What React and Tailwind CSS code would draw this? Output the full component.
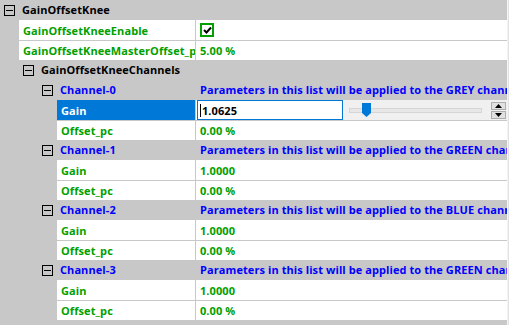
import React from "react";

const channels = [
  { name: "Channel-0", color: "GREY", gain: "1.0625", editing: true },
  { name: "Channel-1", color: "GREEN", gain: "1.0000" },
  { name: "Channel-2", color: "BLUE", gain: "1.0000" },
  { name: "Channel-3", color: "GREEN", gain: "1.0000" },
];

function MinusBox() {
  return (
    <span className="flex h-[11px] w-[11px] shrink-0 items-center justify-center border border-black bg-transparent">
      <span className="h-px w-[7px] bg-black" />
    </span>
  );
}

// a collapsible group line (gray background)
function GroupRow({ level, label, value, blue }) {
  const indent = ["pl-[4px]", "pl-[23px]", "pl-[42px]"][level];
  return (
    <div className="flex h-5 items-center bg-[#c8c8c8] leading-5">
      <div className={`flex h-5 w-[196px] shrink-0 items-center overflow-hidden whitespace-nowrap ${indent}`}>
        <MinusBox />
        <span className={`ml-[7px] ${blue ? "text-[#0000ff]" : "text-black"}`}>{label}</span>
      </div>
      {value && (
        <div className="h-5 min-w-0 flex-1 overflow-hidden whitespace-nowrap pl-[4px] text-[#0000ff]">
          {value}
        </div>
      )}
    </div>
  );
}

// a property line (white background)
function LeafRow({ level, label, children, topLine, selected }) {
  const spacer = level === 1 ? "w-[19px]" : "w-[57px]";
  const labelW = level === 1 ? "w-[176px]" : "w-[138px]";
  return (
    <div className="flex h-5 bg-[#c8c8c8] leading-[19px]">
      <div className={`${spacer} shrink-0`} />
      <div className={`flex min-w-0 flex-1 flex-col ${topLine ? "pt-px" : ""}`}>
        <div className="flex min-h-0 flex-1">
          <div
            className={`flex ${labelW} shrink-0 items-center overflow-hidden whitespace-nowrap pl-[4px] ${
              selected ? "bg-[#0078d7] text-white" : "bg-white text-[#00a000]"
            }`}
          >
            {label}
          </div>
          <div className="w-px shrink-0 bg-[#c8c8c8]" />
          <div className="flex min-w-0 flex-1 items-center bg-white text-[#00a000]">{children}</div>
        </div>
      </div>
    </div>
  );
}

function GainEditor({ value }) {
  return (
    <div className="flex h-full w-full items-stretch">
      <div className="w-px shrink-0 bg-white" />
      <div className="flex w-[146px] shrink-0 items-center border border-[#0078d7] bg-white pl-[2px] text-black">
        <span className="mr-px h-[13px] w-px bg-black" />
        {value}
      </div>
      <div className="relative flex flex-1 items-center bg-[#f0f0f0]">
        <div className="ml-[6px] h-[5px] w-[133px] border border-[#d6d6d6] bg-[#e7e7e7]" />
        <svg className="absolute left-[19px] top-[3px]" width="9" height="14" viewBox="0 0 9 14">
          <path d="M0 0H9V10L4.5 14L0 10Z" fill="#0078d7" />
        </svg>
        <div className="ml-auto mr-[1px] flex flex-col gap-[1px]">
          <div className="flex h-[8px] w-[15px] items-center justify-center border border-[#adadad] bg-[#e1e1e1]">
            <svg width="7" height="4" viewBox="0 0 7 4">
              <path d="M3.5 0L7 4H0Z" fill="#000" />
            </svg>
          </div>
          <div className="flex h-[8px] w-[15px] items-center justify-center border border-[#adadad] bg-[#e1e1e1]">
            <svg width="7" height="4" viewBox="0 0 7 4">
              <path d="M0 0H7L3.5 4Z" fill="#000" />
            </svg>
          </div>
        </div>
      </div>
    </div>
  );
}

function CheckBox() {
  return (
    <span className="ml-[4px] flex h-[14px] w-[14px] items-center justify-center border-2 border-[#00a000] bg-white">
      <svg width="9" height="8" viewBox="0 0 9 8">
        <path d="M1 4L3.5 6.5L8 1.5" stroke="#000" strokeWidth="2" fill="none" />
      </svg>
    </span>
  );
}

export default function App() {
  return (
    <div
      className="flex h-[325px] w-[509px] overflow-hidden bg-[#c8c8c8] text-[11px] font-bold tracking-[0.08px]"
      style={{ fontFamily: '"Open Sans", "Noto Sans", sans-serif' }}
    >
      <div className="w-[507px] shrink-0">
        <GroupRow level={0} label="GainOffsetKnee" />
        <LeafRow level={1} label="GainOffsetKneeEnable">
          <CheckBox />
        </LeafRow>
        <LeafRow level={1} label="GainOffsetKneeMasterOffset_pc" topLine>
          <span className="pl-[4px]">5.00 %</span>
        </LeafRow>
        <GroupRow level={1} label="GainOffsetKneeChannels" />
        {channels.map((ch) => (
          <div key={ch.name}>
            <GroupRow
              level={2}
              blue
              label={ch.name}
              value={`Parameters in this list will be applied to the ${ch.color} channel`}
            />
            <LeafRow level={3} label="Gain" selected={ch.editing}>
              {ch.editing ? <GainEditor value={ch.gain} /> : <span className="pl-[4px]">{ch.gain}</span>}
            </LeafRow>
            <LeafRow level={3} label="Offset_pc" topLine>
              <span className="pl-[4px]">0.00 %</span>
            </LeafRow>
          </div>
        ))}
      </div>
      <div className="w-px shrink-0 bg-[#f4f4f4]" />
      <div className="w-px shrink-0 bg-[#e2e2e2]" />
    </div>
  );
}
